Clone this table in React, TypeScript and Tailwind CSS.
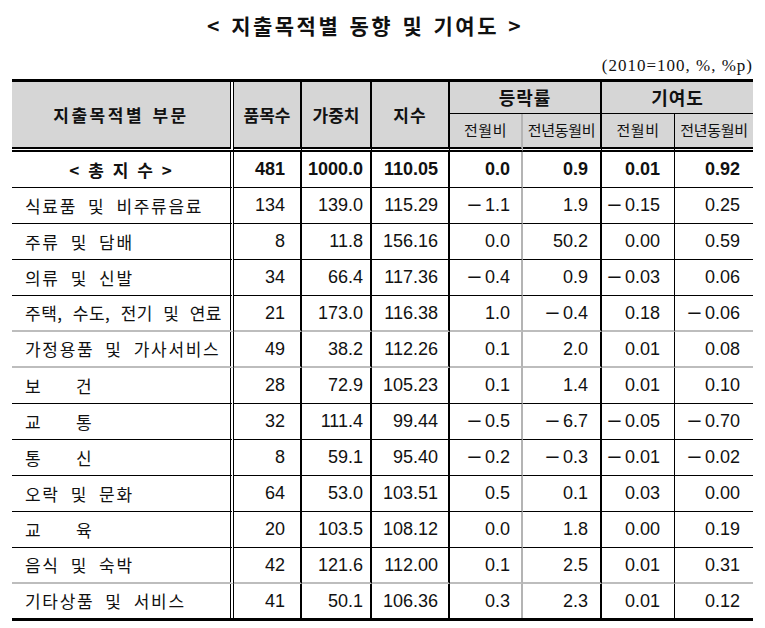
import React from "react";

type Row = {
  label: string;
  cells: string[];
  spread?: boolean;
  tight?: boolean;
  line?: "black" | "gray";
};

const rows: Row[] = [
  { label: "식료품 및 비주류음료", cells: ["134", "139.0", "115.29", "−1.1", "1.9", "−0.15", "0.25"] },
  { label: "주류 및 담배", cells: ["8", "11.8", "156.16", "0.0", "50.2", "0.00", "0.59"] },
  { label: "의류 및 신발", cells: ["34", "66.4", "117.36", "−0.4", "0.9", "−0.03", "0.06"] },
  { label: "주택, 수도, 전기 및 연료", cells: ["21", "173.0", "116.38", "1.0", "−0.4", "0.18", "−0.06"], tight: true, line: "gray" },
  { label: "가정용품 및 가사서비스", cells: ["49", "38.2", "112.26", "0.1", "2.0", "0.01", "0.08"], line: "gray" },
  { label: "보건", cells: ["28", "72.9", "105.23", "0.1", "1.4", "0.01", "0.10"], spread: true },
  { label: "교통", cells: ["32", "111.4", "99.44", "−0.5", "−6.7", "−0.05", "−0.70"], spread: true },
  { label: "통신", cells: ["8", "59.1", "95.40", "−0.2", "−0.3", "−0.01", "−0.02"], spread: true },
  { label: "오락 및 문화", cells: ["64", "53.0", "103.51", "0.5", "0.1", "0.03", "0.00"] },
  { label: "교육", cells: ["20", "103.5", "108.12", "0.0", "1.8", "0.00", "0.19"], spread: true },
  { label: "음식 및 숙박", cells: ["42", "121.6", "112.00", "0.1", "2.5", "0.01", "0.31"], line: "gray" },
  { label: "기타상품 및 서비스", cells: ["41", "50.1", "106.36", "0.3", "2.3", "0.01", "0.12"] },
];

// right borders + padding per column (0 = label column)
const colCls = [
  "pl-[13px] text-left border-r-4 [border-right-style:double] border-r-black",
  "pr-[15px] text-right border-r-2 border-r-black",
  "pr-[7px] text-right border-r-2 border-r-black",
  "pr-[10px] text-right border-r-2 border-r-black",
  "pr-[11px] text-right border-r-2 border-r-[#b4b4b4]",
  "pr-[12px] text-right border-r-2 border-r-black",
  "pr-[14px] text-right border-r border-r-black",
  "pr-[13px] text-right",
];

const kr = "font-['Noto_Sans_CJK_KR',sans-serif]";
const num = "font-['Liberation_Sans','Noto_Sans_CJK_KR',sans-serif]";
const headBg = "bg-[#d6d6d6] bg-clip-padding";
const dbl = "border-b-[5px] [border-bottom-style:double] border-b-black";

const Num = ({ v }: { v: string }) => {
  if (!v.startsWith("−")) return <>{v}</>;
  return (
    <>
      <span className="inline-block w-[18px] origin-left scale-x-[1.4] text-left">−</span>
      {v.slice(1)}
    </>
  );
};

const Label = ({ row }: { row: Row }) => {
  if (row.spread) {
    return (
      <span className="tracking-[1px]">
        <span className="inline-block w-[51px]">{row.label[0]}</span>
        {row.label[1]}
      </span>
    );
  }
  if (row.tight) {
    return <span className="tracking-[0.5px] [word-spacing:6px]">{row.label}</span>;
  }
  return <span className="tracking-[1.7px] [word-spacing:5.5px]">{row.label}</span>;
};

export default function App() {
  return (
    <div className="h-[628px] w-[765px] bg-white pl-[12px] text-[#111]">
      <div className={`${kr} pl-[195px] pt-[13px] text-[21px] font-bold leading-[24px] tracking-[2.5px] [word-spacing:2px]`}>
        &lt; 지출목적별 동향 및 기여도 &gt;
      </div>
      <div className="mt-[19px] w-[741px] text-right font-['Liberation_Serif',serif] text-[17px] leading-[20px] tracking-[1px]">
        (2010=100, %, %p)
      </div>
      <div className="mt-[3px] w-[741px] border-t-[3px] border-b-[3px] border-black">
        <table className="w-[741px] table-fixed border-separate border-spacing-0">
          <colgroup>
            <col className="w-[222px]" />
            <col className="w-[68px]" />
            <col className="w-[70px]" />
            <col className="w-[78px]" />
            <col className="w-[73px]" />
            <col className="w-[79px]" />
            <col className="w-[73px]" />
            <col className="w-[78px]" />
          </colgroup>
          <thead className={kr}>
            <tr className="h-[32px]">
              <th
                rowSpan={2}
                className={`${headBg} ${dbl} border-r-4 [border-right-style:double] border-r-black text-[17px] font-bold tracking-[2.5px] [word-spacing:2px]`}
              >
                지출목적별 부문
              </th>
              <th rowSpan={2} className={`${headBg} ${dbl} border-r-2 border-r-black text-[17px] font-bold`}>
                품목수
              </th>
              <th rowSpan={2} className={`${headBg} ${dbl} border-r-2 border-r-black text-[17px] font-bold`}>
                가중치
              </th>
              <th rowSpan={2} className={`${headBg} ${dbl} border-r-2 border-r-black text-[17px] font-bold tracking-[1px]`}>
                지수
              </th>
              <th colSpan={2} className={`${headBg} border-r-2 border-r-black border-b border-b-black text-[18px] font-bold tracking-[1px]`}>
                등락률
              </th>
              <th colSpan={2} className={`${headBg} border-b border-b-black text-[18px] font-bold tracking-[1px]`}>
                기여도
              </th>
            </tr>
            <tr className="h-[38px] text-[15px]">
              <th className={`${headBg} ${dbl} border-r-2 border-r-[#b4b4b4] font-normal tracking-[0.5px]`}>
                전월비
              </th>
              <th className={`${headBg} ${dbl} border-r-2 border-r-black font-normal tracking-[-0.3px]`}>
                전년동월비
              </th>
              <th className={`${headBg} ${dbl} border-r border-r-black font-normal tracking-[0.5px]`}>
                전월비
              </th>
              <th className={`${headBg} ${dbl} font-normal tracking-[-0.3px]`}>
                전년동월비
              </th>
            </tr>
          </thead>
          <tbody>
            <tr className="h-[36px]">
              <td className={`border-r-4 [border-right-style:double] border-r-black ${kr} border-b border-b-black text-center text-[17px] font-bold tracking-[1px] [word-spacing:3px]`}>
                &lt; 총 지 수 &gt;
              </td>
              {["481", "1000.0", "110.05", "0.0", "0.9", "0.01", "0.92"].map((v, i) => (
                <td key={i} className={`${colCls[i + 1]} ${num} border-b border-b-black text-[18px] font-bold`}>
                  {v}
                </td>
              ))}
            </tr>
            {rows.map((row, r) => {
              const last = r === rows.length - 1;
              const bottom = last
                ? ""
                : row.line === "gray"
                  ? "border-b-2 border-b-[#bdbdbd]"
                  : "border-b border-b-black";
              return (
                <tr key={r} className={last ? "h-[34px]" : "h-[36px]"}>
                  <td className={`${colCls[0]} ${kr} ${bottom} text-[17px] whitespace-nowrap`}>
                    <Label row={row} />
                  </td>
                  {row.cells.map((v, i) => (
                    <td key={i} className={`${colCls[i + 1]} ${num} ${bottom} text-[18px]`}>
                      <Num v={v} />
                    </td>
                  ))}
                </tr>
              );
            })}
          </tbody>
        </table>
      </div>
    </div>
  );
}
